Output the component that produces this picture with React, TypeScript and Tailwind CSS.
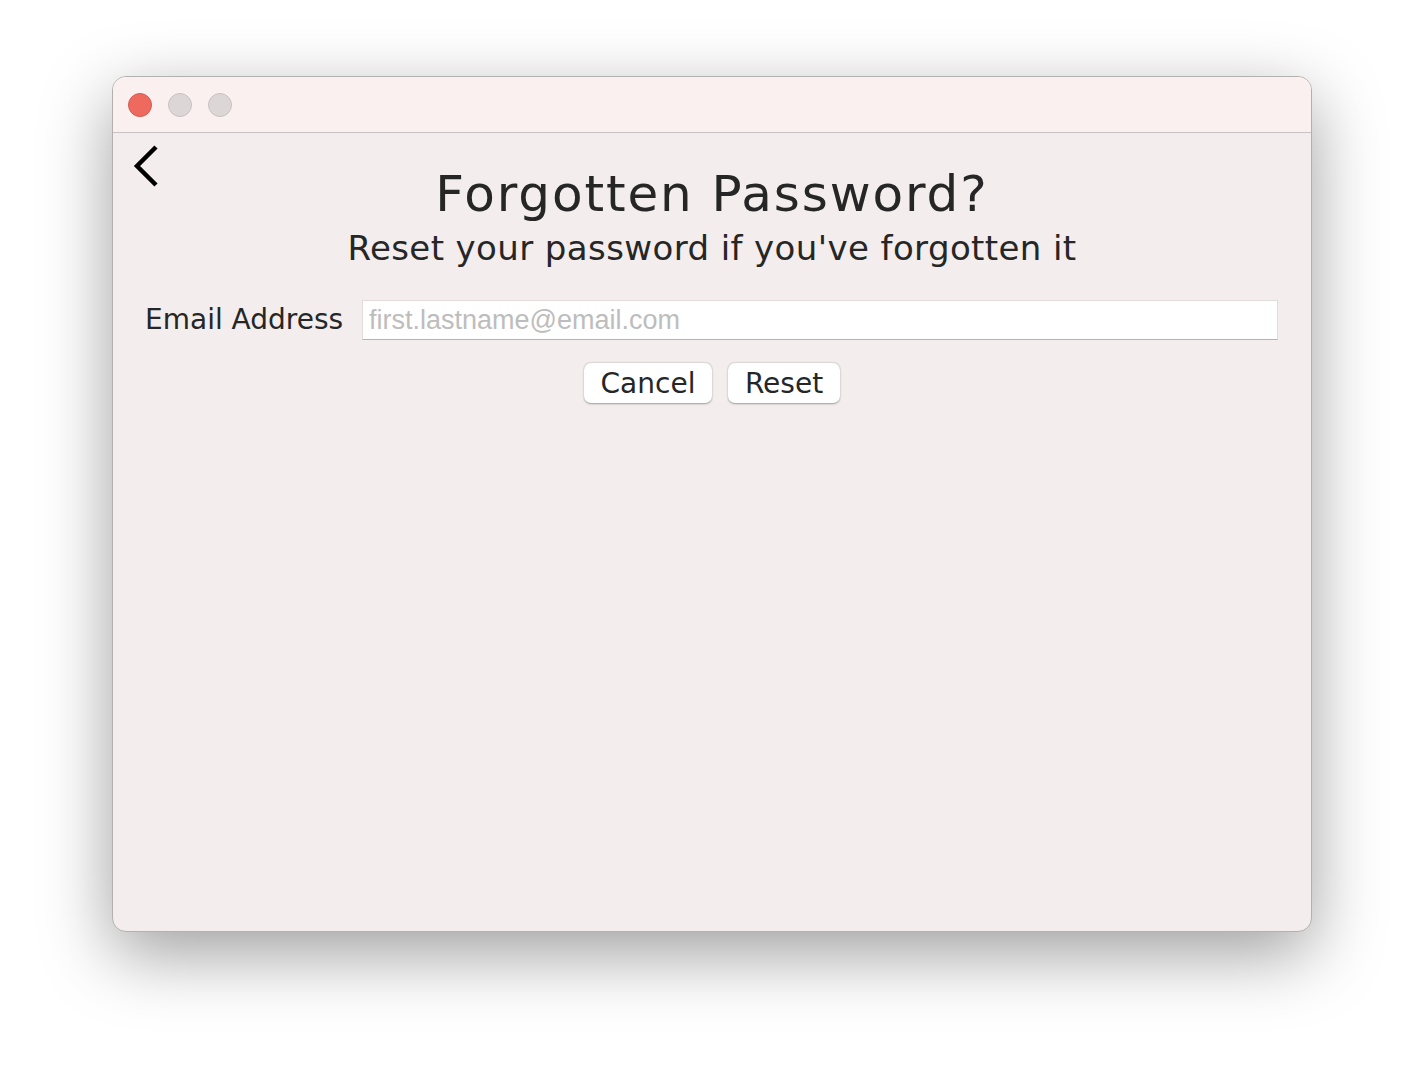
export default function App() {
  const font = { fontFamily: '"DejaVu Sans", "Open Sans", sans-serif' };
  return (
    <div className="flex h-[1080px] w-[1424px] items-start justify-center bg-white pt-[76px]">
      <div className="flex h-[856px] w-[1200px] flex-col overflow-hidden rounded-[14px] border border-[#b5b0b0] bg-[#f3eded] shadow-[0_22px_70px_rgba(0,0,0,0.38)]">
        <div className="flex h-[56px] shrink-0 items-center gap-4 border-b border-[#c8c2c2] bg-[#faf0f0] pl-[15px]">
          <span className="h-6 w-6 rounded-full border border-[#d65a4f] bg-[#ee6a5f]" />
          <span className="h-6 w-6 rounded-full border border-[#c9c1c1] bg-[#ddd6d6]" />
          <span className="h-6 w-6 rounded-full border border-[#c9c1c1] bg-[#ddd6d6]" />
        </div>
        <div className="relative flex flex-col text-[#262626]" style={font}>
          <button className="absolute left-[18px] top-[11px]">
            <svg width="28" height="44" viewBox="0 0 28 44" fill="none">
              <path d="M25 3 L6 22 L25 41" stroke="#000" strokeWidth="4.5" />
            </svg>
          </button>
          <h1 className="mt-[30px] text-center text-[50px] leading-[62px] tracking-[1.9px]">Forgotten Password?</h1>
          <p className="mt-[0px] text-center text-[34px] leading-[46px] tracking-[0.4px]">Reset your password if you've forgotten it</p>
          <div className="mt-[29px] flex items-center pl-[32px] pr-[33px]">
            <label className="w-[217px] text-[28px] leading-[36px]">Email Address</label>
            <div className="flex h-[40px] flex-1 items-center border border-[#e2dcdc] border-b-[#b8b3b3] bg-white px-[6px]">
              <span className="text-[27px] text-[#bdbdbd]" style={{ fontFamily: '"Liberation Sans", Arial, sans-serif' }}>
                first.lastname@email.com
              </span>
            </div>
          </div>
          <div className="mt-[23px] flex justify-center gap-4">
            <button className="h-[40px] w-[128px] rounded-[7px] bg-white text-[28px] shadow-[0_0.5px_2px_rgba(0,0,0,0.35)]">Cancel</button>
            <button className="h-[40px] w-[112px] rounded-[7px] bg-white text-[28px] shadow-[0_0.5px_2px_rgba(0,0,0,0.35)]">Reset</button>
          </div>
        </div>
      </div>
    </div>
  );
}
